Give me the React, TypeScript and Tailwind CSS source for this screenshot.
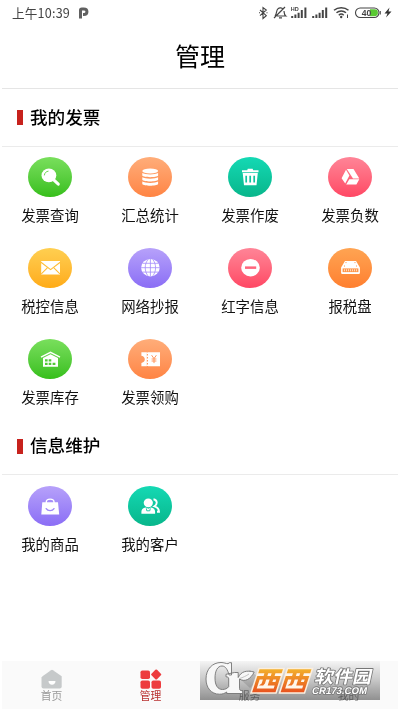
import React from 'react';

type Item = {
  label: string;
  color: string;
  icon: React.ReactNode;
};

const green = 'from-[#79df5c] to-[#35bf18]';
const orange = 'from-[#ffad79] to-[#ff8443]';
const teal = 'from-[#14d9b4] to-[#08b68b]';
const pink = 'from-[#ff8497] to-[#ff4664]';
const yellow = 'from-[#ffcf50] to-[#ffab13]';
const purple = 'from-[#b7a1fa] to-[#8b6df5]';

const invoices: Item[] = [
  {
    label: '发票查询',
    color: green,
    icon: (
      <>
        <ellipse cx="20.9" cy="18.4" rx="7.4" ry="6.9" fill="#fff" />
        <path d="M26 23.2l4.3 4" stroke="#fff" strokeWidth="3" strokeLinecap="round" />
        <path d="M16.4 18c.2-2.2 1.7-3.5 3.7-3.8" stroke="#69d64f" strokeWidth="1" strokeLinecap="round" fill="none" />
      </>
    ),
  },
  {
    label: '汇总统计',
    color: orange,
    icon: (
      <>
        <ellipse cx="22.2" cy="14" rx="7.9" ry="2.5" fill="#fff" />
        <path
          d="M14.3 16c2.6 1.9 13.2 1.9 15.8 0v2.5c-1.4 2.2-14.4 2.2-15.8 0zM14.3 20.3c2.6 1.9 13.2 1.9 15.8 0v2.5c-1.4 2.2-14.4 2.2-15.8 0zM14.3 24.6c2.6 1.9 13.2 1.9 15.8 0v2.3c-1.4 2.3-14.4 2.3-15.8 0z"
          fill="#fff"
        />
      </>
    ),
  },
  {
    label: '发票作废',
    color: teal,
    icon: (
      <>
        <path d="M14 13.2h5.2l.6-1.4h4.8l.6 1.4h5.3v2H14zM14.7 16h15.1l-1.3 12.3H16z" fill="#fff" />
        <path d="M18.2 18.7v6.7M22.2 18.7v6.7M26.2 18.7v6.7" stroke="#10c69f" strokeWidth="1.7" />
      </>
    ),
  },
  {
    label: '发票负数',
    color: pink,
    icon: (
      <path
        d="M18.8 12h6.7l5.8 9.6h-6.3zM18 12.8l3.4 5.7-4.2 7.9-3.6-5.1zM21.3 22.3h10l-2.9 5.1H18.2z"
        fill="#fff"
      />
    ),
  },
  {
    label: '税控信息',
    color: yellow,
    icon: (
      <>
        <rect x="13.2" y="13" width="18.8" height="13.5" fill="#fff" />
        <path d="M13 14.3l9.6 7.3 9.6-7.3M13.3 25.8l6-6M31.9 25.8l-6-6" stroke="#ffbd35" strokeWidth="1.1" fill="none" />
      </>
    ),
  },
  {
    label: '网络抄报',
    color: purple,
    icon: (
      <>
        <ellipse cx="22.4" cy="19.7" rx="9.3" ry="8.7" fill="#fff" />
        <path
          d="M13 19.7h19M14.5 15.3h16M14.5 24.1h16M22.4 11v17.5M20 11.5c-3.7 4.5-3.7 11.9 0 16.4M24.8 11.5c3.7 4.5 3.7 11.9 0 16.4"
          stroke="#a38afa"
          strokeWidth=".8"
          fill="none"
        />
      </>
    ),
  },
  {
    label: '红字信息',
    color: pink,
    icon: (
      <>
        <ellipse cx="22.5" cy="19.7" rx="9.3" ry="8.7" fill="#fff" />
        <rect x="17" y="18.4" width="11.2" height="2.5" fill="#ff667d" />
      </>
    ),
  },
  {
    label: '报税盘',
    color: 'from-[#ffa452] to-[#ff7f2f]',
    icon: (
      <>
        <path d="M17 13h11l3.9 6.5v5.6c0 .5-.3.8-.8.8H13.9c-.5 0-.8-.3-.8-.8v-5.6z" fill="#fff" />
        <rect x="14.6" y="20.4" width="15.8" height="3.7" fill="#ff964a" />
        <path d="M16 22.3h13" stroke="#ffd9bd" strokeWidth="2" strokeDasharray="1 1" />
        <path d="M17.5 14.6h1M26.5 14.6h1M16 18h1M28 18h1" stroke="#ff964a" strokeWidth="1" />
      </>
    ),
  },
  {
    label: '发票库存',
    color: green,
    icon: (
      <>
        <path d="M13 18.2l9.5-4.9 9.5 4.9" stroke="#fff" strokeWidth="1.4" fill="none" />
        <path d="M15 19l7.5-3.8 7.5 3.8v8.7H15z" fill="#fff" />
        <path
          d="M17 20.3h2.6v2.2H17zM20.7 20.3h2.6v2.2h-2.6zM17 23.7h2.6v2.2H17zM20.7 23.7h2.6v2.2h-2.6zM24.6 23.7h2.8v2.2h-2.8z"
          fill="#50cb35"
        />
      </>
    ),
  },
  {
    label: '发票领购',
    color: orange,
    icon: (
      <>
        <path
          d="M13.4 13.3h5.4v13.9h-5.4v-3.3c2.6-.6 3.4-1.9 3.4-3.6s-.8-3-3.4-3.6zM20 13.3h12v13.9H20z"
          fill="#fff"
        />
        <path d="M19.4 13.5v13.5" stroke="#fff" strokeWidth="1.6" strokeDasharray="1.5 1.5" />
        <path d="M23.6 16.2l2.4 3.4 2.4-3.4M26 19.5v4.6M23.6 20h4.8M23.6 22h4.8" stroke="#ff955c" strokeWidth="1" fill="none" />
      </>
    ),
  },
];

const records: Item[] = [
  {
    label: '我的商品',
    color: purple,
    icon: (
      <>
        <path d="M14.3 16.3H30l1.2 12.3H13.3z" fill="#fff" />
        <path d="M18.3 17v-1c0-3.9 7.7-3.9 7.7 0v1" stroke="#fff" strokeWidth="1.4" fill="none" />
        <path d="M18.2 22.6c1.6 2.6 6.2 2.6 7.8 0" stroke="#a088f8" strokeWidth="1.3" fill="none" strokeLinecap="round" />
      </>
    ),
  },
  {
    label: '我的客户',
    color: teal,
    icon: (
      <>
        <ellipse cx="20.3" cy="16.8" rx="4.6" ry="4.4" fill="#fff" />
        <path d="M13.4 27.7v-2c0-2.4 1.8-3.6 4.6-4.1l2.3 1.1 2.4-1.1c2.8.5 4.4 1.7 4.4 4.1v2z" fill="#fff" />
        <path d="M18.3 22.3l.5 2.500h3l.5-2.500" stroke="#0fc79f" strokeWidth=".9" fill="none" />
        <path d="M25.500 13.200c3.800.4 4.300 5.100 1 7.100 3.400 1 4.400 2.500 4.500 5.500H29" stroke="#fff" strokeWidth="1.9" fill="none" />
      </>
    ),
  },
];

function StatusBar() {
  return (
    <div className="flex h-[26px] items-center pl-3 pr-2 text-[#444]">
      <span className="text-[12.6px] leading-none tracking-[0.2px]">上午10:39</span>
      <svg className="ml-2" width="11" height="12" viewBox="0 0 11 12">
        <path d="M2.5 11.5V3.3c0-.8.5-1.3 1.3-1.3h2c4.2 0 4.2 5.5 0 5.5H5" stroke="#606060" strokeWidth="3" fill="none" />
      </svg>
      <svg className="ml-auto" width="134" height="16" viewBox="258 4.5 134 16" fill="none" stroke="#444">
        <path d="M260 9.5l6.3 5.7-3.3 2.8V7l3.3 2.5-6.3 5.7M259 12.3h1M266.5 12.3h1" strokeWidth="1.1" />
        <path d="M275 15.5c2-1.7 1-6 3-7.3 1.5-1.2 4-.9 5 .4M284 10.5c.3 2.5.3 4 1.7 5H277M279 17.3h3M274 17.5L285 6.5" strokeWidth="1.2" />
        <path
          d="M292.2 17.5v-2M295.4 17.5v-3.5M298.6 17.5v-5.3M301.8 17.5v-8M305.4 17.5V7M313.2 17.5v-2M316.4 17.5v-3.5M319.6 17.5v-5.3M322.8 17.5v-8M326.2 17.5V7"
          strokeWidth="2"
        />
        <text x="290.7" y="10.6" fontSize="5.5" fontWeight="700" fill="#444" stroke="none" className="font-['Liberation_Sans',sans-serif]">
          HD
        </text>
        <path d="M334 9.8c4-3.5 10.5-3.5 14.5 0M336.5 12.3c2.7-2.4 6.8-2.4 9.5 0M338.8 14.7c1.4-1.3 3.5-1.3 4.9 0" strokeWidth="1.5" />
        <circle cx="341.2" cy="16.5" r="1.2" fill="#444" stroke="none" />
        <path d="M347.5 14v3.5" strokeWidth="1" />
        <rect x="355.5" y="7.5" width="23.5" height="9.5" rx="4.7" fill="#fff" strokeWidth="1.1" />
        <path d="M370 8.8h4.5a3.4 3.4 0 010 6.900H370z" fill="#59c932" stroke="none" />
        <path d="M380.3 10.5v3.5" strokeWidth="1" />
        <text x="361.8" y="15.3" fontSize="8.5" fontWeight="700" fill="#444" stroke="none" className="font-['Liberation_Sans',sans-serif]">
          40
        </text>
        <path d="M389.5 7l-5 6h3l-1.5 4 5.5-6h-3z" fill="#333" stroke="none" />
      </svg>
    </div>
  );
}

function SectionTitle({ title, height }: { title: string; height: string }) {
  return (
    <div className={`mx-0.5 flex items-center border-b border-[#ebebeb] pl-[15px] ${height}`}>
      <span className="mr-[7px] h-[15px] w-1.5 bg-[#c7221d]" />
      <h2 className="-mt-0.5 text-[17.6px] font-medium leading-none text-black">{title}</h2>
    </div>
  );
}

function Grid({ items }: { items: Item[] }) {
  return (
    <div className="grid grid-cols-4 pt-2.5">
      {items.map((item) => (
        <div key={item.label} className="flex h-[91px] flex-col items-center">
          <div className={`h-10 w-[44px] rounded-[50%] bg-linear-to-b ${item.color}`}>
            <svg width="44" height="40" viewBox="0 0 44 40" fill="none">
              {item.icon}
            </svg>
          </div>
          <span className="mt-2 text-[14.4px] leading-5 text-[#111]">{item.label}</span>
        </div>
      ))}
    </div>
  );
}

function TabBar() {
  return (
    <nav className="mx-0.5 grid h-12 grid-cols-4 bg-[#fafafa] text-[10.8px] leading-none text-[#999]">
      <div className="flex flex-col items-center pt-2">
        <svg width="22" height="20" viewBox="0 0 22 20">
          <path d="M1.5 7.3L10 1.2q1-.7 2 0l8.7 6.1v10.2q0 2-2 2H2.5q-2 0-2-2V8.5z" fill="#c6c9ca" />
          <path d="M7.5 12h7c0 5-7 5-7 0z" fill="#fff" />
        </svg>
        <span className="mt-px">首页</span>
      </div>
      <div className="flex flex-col items-center pt-2 text-[#b9302f]">
        <svg width="22" height="20" viewBox="0 0 22 20" fill="#ed3c3e">
          <rect x=".5" y="1.5" width="9.5" height="8.5" rx="1.8" />
          <rect x="12.3" y="1.6" width="7.8" height="7.8" rx="1.2" transform="rotate(45 16.2 5.5)" />
          <rect x=".5" y="11.5" width="9.5" height="8.2" rx="1.8" />
          <rect x="11.5" y="11.5" width="9.5" height="8.2" rx="1.8" />
        </svg>
        <span className="mt-px">管理</span>
      </div>
      <div className="flex flex-col items-center pt-2">
        <svg width="22" height="20" viewBox="0 0 22 20" fill="#dcdcdc">
          <path d="M11 1l10 9-10 9-10-9z" />
        </svg>
        <span className="mt-px">服务</span>
      </div>
      <div className="flex flex-col items-center pt-2">
        <svg width="22" height="20" viewBox="0 0 22 20" fill="#f2f2f2">
          <circle cx="11" cy="6" r="4" />
          <path d="M3 18c0-8 16-8 16 0z" />
        </svg>
        <span className="mt-px">我的</span>
      </div>
    </nav>
  );
}

function Tile({ x }: { x: number }) {
  return (
    <g transform={`translate(${x} 7.5) skewX(-18)`}>
      <path d="M0 0h25v24.5H0z" fill="url(#flame)" stroke="#fbefe0" strokeWidth="1.6" />
      <path
        d="M0 4.8h7v2.7H0zM18 4.8h7v2.700h-7zM10.8 4.8h3.4v2.7h-3.4zM4.2 11h3.3v4l-2 2h4.2l1.1-2v-4h3.4v6h7v3H4.2zM17.8 11h3v2.6h-3z"
        fill="#fff6ea"
      />
    </g>
  );
}

function SiteLogo() {
  return (
    <svg className="absolute left-[200px] top-[661px]" width="180" height="39" viewBox="0 0 180 39">
      <defs>
        <linearGradient id="flame" x1="0" y1="0" x2="0" y2="1">
          <stop offset="0" stopColor="#f3b32c" />
          <stop offset="1" stopColor="#e8501e" />
        </linearGradient>
      </defs>
      <g fill="#f7f7f7" stroke="#747474" strokeWidth=".9" strokeLinejoin="round">
        <path d="M21 1.5c3 0 5 1.2 7 1.2l1.5-1h2V14h-2.4C27.500 8.500 25.500 5 22 5c-4.500 0-7 5-7 12 0 7.500 2.800 11.500 7.500 11.500 2.800 0 4.800-1 6.200-2.800v-7.700c0-1.500-.6-2.200-2.700-2.200v-2.500l8.500-1.800h3.700v5c3-6 8-7.500 16-5.500-3.500 7-9 10.500-14.700 7v9.500c0 1.500.8 2.200 3.200 2.200v2.800H26.700V31c-2 1.500-4.500 2.200-7.200 2.200C11 33.200 6 26.500 6 18 6 8 12.500 1.500 21 1.500z" />
        <path d="M39.5 17.500c3.5-1 6.500-2.500 9.500-4.500" fill="none" stroke="#aaa" strokeWidth=".7" />
      </g>
      <Tile x={59} />
      <Tile x={87.5} />
      <g fill="#fff" stroke="#777" strokeWidth="1.6" paintOrder="stroke" strokeLinejoin="round">
        <text
          x="0"
          y="0"
          fontSize="17.5"
          fontWeight="700"
          textLength="57"
          lengthAdjust="spacingAndGlyphs"
          transform="translate(114 21.5) skewX(-12)"
        >
          软件园
        </text>
        <text
          x="0"
          y="0"
          fontSize="9.8"
          fontWeight="700"
          textLength="55"
          lengthAdjust="spacingAndGlyphs"
          transform="translate(111.500 32.500) skewX(-12)"
          className="font-['Liberation_Sans',sans-serif]"
        >
          CR173.COM
        </text>
      </g>
    </svg>
  );
}

export default function App() {
  return (
    <div className="relative flex h-[710px] w-[400px] flex-col overflow-hidden bg-white font-['Noto_Sans_CJK_SC',sans-serif]">
      <StatusBar />
      <header className="mx-0.5 flex h-[63px] items-center justify-center border-b border-[#e5e5e5] pb-[3px] text-[25px] leading-none text-black">
        <h1>管理</h1>
      </header>
      <SectionTitle title="我的发票" height="h-[58px]" />
      <Grid items={invoices} />
      <div className="-mt-3">
        <SectionTitle title="信息维护" height="h-[57px]" />
      </div>
      <div className="pt-px">
        <Grid items={records} />
      </div>
      <div className="mt-auto pb-[1px]">
        <TabBar />
      </div>
      <div className="absolute left-[200px] top-[661px] h-[39px] w-[180px] bg-linear-to-b from-[#fafafa] via-[#cacaca] to-[#939393] mix-blend-multiply" />
      <SiteLogo />
    </div>
  );
}
